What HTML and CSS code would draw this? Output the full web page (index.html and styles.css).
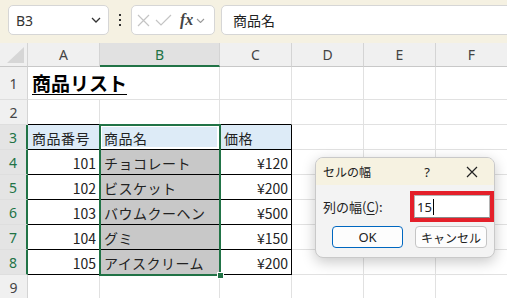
FILE: index.html
```html
<!DOCTYPE html>
<html lang="ja">
  <head>
    <meta charset="UTF-8" />
    <meta name="viewport" content="width=device-width, initial-scale=1.0" />
    <title>セルの幅</title>
    <link rel="stylesheet" href="styles.css">
  </head>
  <body>
    <div class="toolbar">
      <div class="namebox">
        <span>B3</span>
        <svg width="10" height="6" viewBox="0 0 10 6"><path d="M1 1l4 4 4-4" fill="none" stroke="#333" stroke-width="1.3" /></svg>
      </div>
      <div class="dots"><i></i><i></i><i></i></div>
      <div class="fxbox">
        <svg width="13" height="13" viewBox="0 0 13 13"><path d="M1 1l11 11M12 1L1 12" fill="none" stroke="#c4c4c4" stroke-width="1.2" /></svg>
        <svg width="17" height="12" viewBox="0 0 17 12"><path d="M1 6l5 5L16 1" fill="none" stroke="#c4c4c4" stroke-width="1.2" /></svg>
        <span class="fx">fx</span>
        <svg width="9" height="5" viewBox="0 0 9 5"><path d="M1 1l3.5 3.5L8 1" fill="none" stroke="#999" stroke-width="1.1" /></svg>
      </div>
      <div class="formula">商品名</div>
    </div>

    <div class="sheet">
      <div class="hd corner"><span class="tri"></span></div>
      <div class="hd">A</div>
      <div class="hd on">B</div>
      <div class="hd">C</div>
      <div class="hd">D</div>
      <div class="hd">E</div>
      <div class="hd">F</div>

      <div class="rh">1</div>
      <div class="c title"><span>商品リスト</span></div>
      <div class="c"></div>
      <div class="c"></div>
      <div class="c"></div>
      <div class="c"></div>
      <div class="c"></div>

      <div class="rh">2</div>
      <div class="c top"></div>
      <div class="c top"></div>
      <div class="c top"></div>
      <div class="c"></div>
      <div class="c"></div>
      <div class="c"></div>

      <div class="rh on">3</div>
      <div class="c tb th">商品番号</div>
      <div class="c tb th active">商品名</div>
      <div class="c tb th">価格</div>
      <div class="c"></div>
      <div class="c"></div>
      <div class="c"></div>

      <div class="rh on">4</div>
      <div class="c tb r">101</div>
      <div class="c tb g">チョコレート</div>
      <div class="c tb r">¥120</div>
      <div class="c"></div>
      <div class="c"></div>
      <div class="c"></div>

      <div class="rh on">5</div>
      <div class="c tb r">102</div>
      <div class="c tb g">ビスケット</div>
      <div class="c tb r">¥200</div>
      <div class="c"></div>
      <div class="c"></div>
      <div class="c"></div>

      <div class="rh on">6</div>
      <div class="c tb r">103</div>
      <div class="c tb g">バウムクーヘン</div>
      <div class="c tb r">¥500</div>
      <div class="c"></div>
      <div class="c"></div>
      <div class="c"></div>

      <div class="rh on">7</div>
      <div class="c tb r">104</div>
      <div class="c tb g">グミ</div>
      <div class="c tb r">¥150</div>
      <div class="c"></div>
      <div class="c"></div>
      <div class="c"></div>

      <div class="rh on">8</div>
      <div class="c tb r">105</div>
      <div class="c tb g">アイスクリーム</div>
      <div class="c tb r">¥200</div>
      <div class="c"></div>
      <div class="c"></div>
      <div class="c"></div>

      <div class="rh">9</div>
      <div class="c"></div>
      <div class="c"></div>
      <div class="c"></div>
      <div class="c"></div>
      <div class="c"></div>
      <div class="c"></div>

      <div class="sel"><span class="handle"></span></div>
    </div>

    <div class="dialog">
      <div class="dlg-title">
        <span class="dlg-name">セルの幅</span>
        <span class="dlg-help">?</span>
        <span class="dlg-close">
          <svg width="12" height="12" viewBox="0 0 12 12"><path d="M1 1l10 10M11 1L1 11" fill="none" stroke="#222" stroke-width="1.2" /></svg>
        </span>
      </div>
      <div class="dlg-row">
        <span class="dlg-label">列の幅(<u>C</u>):</span>
        <div class="mark">
          <div class="input">15<i class="caret"></i></div>
        </div>
      </div>
      <div class="dlg-btns">
        <div class="btn ok">OK</div>
        <div class="btn cancel">キャンセル</div>
      </div>
    </div>
  </body>
</html>
```

FILE: styles.css
```css
* {
  padding: 0;
  margin: 0;
  box-sizing: border-box;
}
body {
  width: 507px;
  height: 298px;
  overflow: hidden;
  position: relative;
  background: #fff;
  color: #222;
  font-family: 'Noto Sans CJK JP', sans-serif;
}
.toolbar {
  height: 43px;
  background: #f5f1e2;
  display: flex;
  align-items: flex-start;
  padding: 5px 0 0 8px;
  font-size: 14px;
}
.namebox {
  width: 101px;
  height: 30px;
  border: 1px solid #d6d6d6;
  border-radius: 5px;
  background: #fff;
  display: flex;
  align-items: center;
  justify-content: space-between;
  padding: 0 7px 0 7px;
  font-family: 'Noto Sans', sans-serif;
  color: #333;
}
.dots {
  width: 22px;
  height: 30px;
  display: flex;
  flex-direction: column;
  align-items: center;
  justify-content: center;
  gap: 3px;
}
.dots i {
  width: 2px;
  height: 2px;
  background: #333;
}
.fxbox {
  width: 84px;
  height: 30px;
  border: 1px solid #d6d6d6;
  border-radius: 5px;
  background: #fff;
  display: flex;
  align-items: center;
  padding-left: 5px;
  gap: 5px;
}
.fxbox .fx {
  font-family: 'Liberation Serif', serif;
  font-style: italic;
  font-weight: bold;
  font-size: 16px;
  color: #444;
  margin-left: 3px;
  margin-right: -2px;
}
.formula {
  flex: 1;
  height: 30px;
  margin-left: 6px;
  margin-right: -8px;
  border: 1px solid #d6d6d6;
  border-radius: 5px;
  background: #fff;
  display: flex;
  align-items: center;
  padding-left: 11px;
}
.sheet {
  position: relative;
  display: grid;
  grid-template-columns: 28px 72px 120px 72px 72px 72px 72px;
  grid-template-rows: 24px 33px repeat(8, 25px);
  font-size: 14px;
}
.hd {
  background: #f0f0f0;
  border-right: 1px solid #d4d4d4;
  border-bottom: 1px solid #c8c8c8;
  display: flex;
  align-items: center;
  justify-content: center;
  font-family: 'Noto Sans', sans-serif;
  color: #444;
}
.hd.on {
  background: #e1e1e1;
  color: #217346;
  border-bottom: 2px solid #217346;
}
.corner {
  position: relative;
}
.tri {
  position: absolute;
  right: 3px;
  bottom: 3px;
  width: 0;
  height: 0;
  border-left: 17px solid transparent;
  border-bottom: 16px solid #d6d6d6;
}
.rh {
  background: #f0f0f0;
  border-right: 1px solid #d4d4d4;
  border-bottom: 1px solid #dedede;
  display: flex;
  align-items: center;
  justify-content: center;
  font-family: 'Noto Sans', sans-serif;
  color: #444;
}
.rh.on {
  background: #e4e4e4;
  color: #217346;
  border-right: 2px solid #217346;
}
.c {
  border-right: 1px solid #e1e1e1;
  border-bottom: 1px solid #e1e1e1;
  display: flex;
  align-items: flex-end;
  padding: 0 3px 1px 4px;
  white-space: nowrap;
  letter-spacing: 0.5px;
}
.c.r {
  justify-content: flex-end;
  letter-spacing: 0;
}
.c.top {
  border-bottom-color: #000;
}
.c.tb {
  border-right-color: #000;
  border-bottom-color: #000;
}
.c.th {
  background: #ddebf7;
}
.c.g {
  background: #c8c8c8;
}
.c.active {
  box-shadow: inset 0 0 0 2px #fff;
}
.c.title {
  border-right: none;
  align-items: center;
  padding-bottom: 2px;
  overflow: visible;
  font-size: 19px;
  font-weight: bold;
  letter-spacing: 0;
  text-decoration: underline;
  text-underline-offset: 3px;
  color: #000;
}
/* selection frame over B3:B8 */
.sel {
  position: absolute;
  left: 99px;
  top: 81px;
  width: 122px;
  height: 152px;
  border: 2px solid #217346;
  pointer-events: none;
}
.handle {
  position: absolute;
  right: -5px;
  bottom: -5px;
  width: 7px;
  height: 7px;
  background: #217346;
  border: 1px solid #fff;
}
.dialog {
  position: absolute;
  left: 315px;
  top: 157px;
  width: 180px;
  height: 101px;
  border: 1px solid #c9c9c9;
  border-radius: 8px;
  background: #f3f3f3;
  box-shadow: 0 4px 14px rgba(0, 0, 0, 0.22);
  overflow: hidden;
  font-size: 13px;
}
.dlg-title {
  height: 27px;
  background: #f6f2e1;
  display: flex;
  align-items: center;
  padding: 0 12px 0 7px;
  font-size: 12px;
}
.dlg-name {
  flex: 1;
}
.dlg-help {
  width: 20px;
  text-align: center;
  font-family: 'Noto Sans', sans-serif;
  font-size: 13px;
  margin-right: 25px;
}
.dlg-close {
  width: 20px;
  display: flex;
  justify-content: center;
}
.dlg-row {
  display: flex;
  align-items: center;
  justify-content: space-between;
  margin-top: 6px;
  padding-left: 7px;
}
.dlg-label u {
  text-underline-offset: 2px;
}
.mark {
  width: 84px;
  height: 31px;
  border: 4px solid #e4202a;
  background: #fff;
}
.input {
  height: 100%;
  border: 1px solid #b4b4b4;
  border-bottom-color: #8a8a8a;
  background: #fff;
  display: flex;
  align-items: center;
  padding-left: 2px;
  font-family: 'Noto Sans', sans-serif;
  font-size: 13px;
}
.caret {
  display: inline-block;
  width: 1px;
  height: 16px;
  background: #000;
  margin-left: 1px;
}
.dlg-btns {
  display: flex;
  gap: 12px;
  margin-top: 4px;
  padding-left: 16px;
}
.btn {
  width: 72px;
  height: 22px;
  border: 1px solid #c5c5c5;
  border-radius: 4px;
  background: #fdfdfd;
  display: flex;
  align-items: center;
  justify-content: center;
  font-size: 13px;
}
.btn.ok {
  width: 71px;
  border-color: #0067c0;
  font-family: 'Noto Sans', sans-serif;
}
.btn.cancel {
  font-size: 12px;
}
```
